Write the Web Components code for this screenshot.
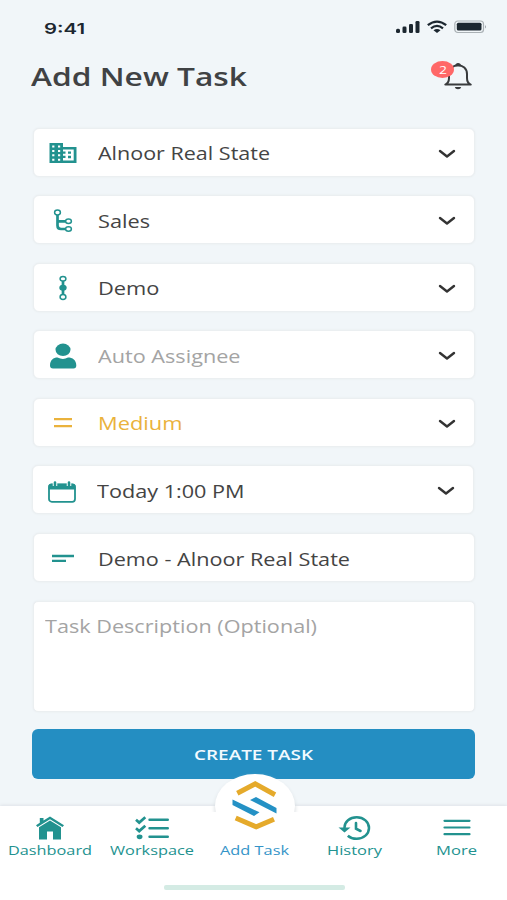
<!DOCTYPE html>
<html lang="en">
<head>
<meta charset="utf-8">
<title>Add New Task</title>
<style>
html,body{margin:0;padding:0}
body{width:507px;height:900px;overflow:hidden;background:#f1f6f9;font-family:"Open Sans","Noto Sans",sans-serif;color:#404040}
</style>
</head>
<body>
<task-screen></task-screen>
<script>
const define=(name,html,ready)=>customElements.define(name,class extends HTMLElement{
  connectedCallback(){
    if(this.shadowRoot)return;
    const root=this.attachShadow({mode:'open'});
    root.innerHTML=typeof html==='function'?html(this):html;
    if(ready)ready(this,root);
  }
});

// Text stretched horizontally to fill a given width
define('wide-text','<style>:host{display:block;flex:none;white-space:nowrap}span{display:inline-block;transform-origin:0 50%}</style><span></span>',(host,root)=>{
  const w=+host.getAttribute('w'),s=root.querySelector('span');
  host.style.width=w+'px';
  s.textContent=host.textContent;
  const n=s.getBoundingClientRect().width;
  if(n)s.style.transform=`scaleX(${w/n})`;
});

const icons={
 building:[28,22,'<path fill-rule="evenodd" fill="#22928f" d="M.5 1H14V5H27.500V21H.5ZM3.200 3.500V5.500H5.400V3.500ZM9 3.500V5.500H11.200V3.500ZM3.200 8V10H5.400V8ZM9 8V10H11.200V8ZM3.200 12.300V14.300H5.400V12.300ZM9 12.300V14.300H11.200V12.300ZM3.200 16.800V18.800H5.400V16.800ZM9 16.800V18.800H11.200V16.800ZM14 7.500V9.500H16.500V11.800H14V13.800H16.500V16H14V18.500H24.700V7.500ZM19 9.500H22V11.800H19ZM19 13.800H22V16.200H19Z"/>'],
 branch:[20,24,'<g fill="none" stroke="#22928f"><path stroke-width="2.700" d="M4.500 6V16.500Q4.500 20 8 20H12.500M4.500 12.300H12.500"/><g stroke-width="1.500"><ellipse cx="4.500" cy="3.500" rx="2.900" ry="2.400"/><ellipse cx="15.500" cy="12.300" rx="2.900" ry="2.200"/><ellipse cx="15.500" cy="20" rx="2.900" ry="2.200"/></g></g>'],
 steps:[10,26,'<path d="M5 5V21" stroke="#22928f" stroke-width="2.700"/><g fill="#fff" stroke="#22928f" stroke-width="1.500"><ellipse cx="5" cy="3.700" rx="2.900" ry="2.300"/><ellipse cx="5" cy="22" rx="2.900" ry="2.400"/></g><ellipse cx="5" cy="12.800" rx="3.700" ry="3" fill="#22928f"/>'],
 person:[28,26,'<g fill="#22928f"><ellipse cx="14" cy="6.800" rx="7.500" ry="6.200"/><path d="M1 22.500C1 17 4.500 14.500 8.500 14.500Q14 17.300 19 14.500C23.500 14.500 27.300 17 27.300 22.500Q27.300 25.500 24.500 25.500H4Q1 25.500 1 22.500Z"/></g>'],
 medium:[18,12,'<path d="M0 2.200H18M0 9.200H18" stroke="#eab23c" stroke-width="2.200"/>'],
 calendar:[28,22,'<rect x="1" y="3.500" width="26" height="17.300" rx="2.800" fill="none" stroke="#22928f" stroke-width="1.800"/><path fill="#22928f" d="M.5 8.500V5.500Q.5 2.700 3.500 2.700H24.500Q27.500 2.700 27.500 5.500V8.500Z"/><g stroke="#fff" stroke-width="4.500"><path d="M7 0V5M21 0V5"/></g><path d="M7 1.500V4.500M21 1.500V4.500" stroke="#22928f" stroke-width="2.600" stroke-linecap="round"/>'],
 notes:[22,10,'<path d="M0 2H22M0 6.800H14" stroke="#22928f" stroke-width="2.300"/>'],
 chevron:[18,10,'<path d="M2 2 9 7.500 16 2" fill="none" stroke="#333" stroke-width="2.400" stroke-linecap="round" stroke-linejoin="round"/>'],
 signal:[24,14,'<g fill="#1c2730"><rect x="0" y="8.800" width="4" height="4.200" rx="1.500"/><rect x="6.500" y="6.600" width="4" height="6.400" rx="1.300"/><rect x="13" y="4" width="4" height="9" rx="1.300"/><rect x="19.500" y="1" width="4" height="12" rx="1.300"/></g>'],
 wifi:[20,14,'<g fill="none" stroke="#1c2730" stroke-width="2.300"><path d="M.8 5.200Q10-2 19.200 5.200M4 8.300Q10 3.500 16 8.300"/></g><path fill="#1c2730" d="M6.500 10.200Q10 7.800 13.500 10.200L10 13Z"/>'],
 battery:[33,14,'<rect x=".8" y="1" width="28.700" height="11.500" rx="3" fill="none" stroke="#aab1b5" stroke-width="1.200"/><rect x="2.800" y="2.800" width="24.700" height="7.800" rx="1.500" fill="#1c2730"/><path d="M31 5Q33 6.800 31 8.500Z" fill="#9da5aa"/>'],
 bell:[28,28,'<path fill="none" stroke="#393b3d" stroke-width="2" stroke-linejoin="round" d="M1.300 22.600Q5 21 5 16V12C5 6.500 9.200 3.300 14 3.300S23 6.500 23 12V16Q23 21 26.700 22.600Z"/><path fill="#393b3d" d="M10.500 4.200Q11.500 1 14 .9T17.500 4.200ZM10.800 25H17.200Q16.800 27.300 14 27.300T10.800 25Z"/>'],
 home:[28,24,'<path fill="#22928f" d="M14 .5 28 9.300 26.500 11 14 3.300 1.500 11 0 9.300 3.800 6.800V2H7.500V4.500Z"/><path fill="#22928f" d="M14 4.400 25 11.200V23.500H17V15.500H11V23.500H3V11.200Z"/>'],
 list:[34,24,'<g fill="none" stroke="#22928f" stroke-width="2.400"><path stroke-linecap="round" d="M14.500 3.800H32.800M14.500 12.300H32.800M14.500 20.800H32.800"/><path stroke-width="2.700" d="M1 3.800 4.200 6.600 10.300 1.200M1 12.300 4.200 15.100 10.300 9.700"/></g><ellipse cx="4.600" cy="20.800" rx="2.900" ry="2.400" fill="#22928f"/>'],
 clock:[34,26,'<path fill="none" stroke="#22928f" stroke-width="2.500" d="M6.500 14V12.500C6.500 6.800 11.800 2.300 18.700 2.300S31 7 31 13 25.600 23.800 18.700 23.800Q13.300 23.800 9.800 20.700"/><path fill="#22928f" d="M.5 12.500H12.500L6.500 17.500Z"/><path fill="none" stroke="#22928f" stroke-width="2.600" stroke-linecap="round" d="M18 8V13.700L22.500 16"/>'],
 menu:[28,20,'<path d="M1.500 2.800H26.500M1.500 9.500H26.500M1.500 16.200H26.500" stroke="#22928f" stroke-width="2.200" stroke-linecap="round"/>'],
 logo:[46,50,'<g fill="none" stroke-width="5"><path stroke="#e5aa2b" d="M5.300 12.200 23.200 2.900 43 13.800M3.700 37 24.300 45.900 42 38.200"/></g><path fill="#2491c5" d="M.5 18.500 27.500 31.300 22 35 .5 24ZM18 19 24 16 44.500 27V32.500Z"/>']
};
define('line-icon',h=>{const [w,t,body]=icons[h.getAttribute('name')];return `<style>:host{display:block;flex:none;width:${w}px;height:${t}px}svg{display:block}</style><svg width="${w}" height="${t}" viewBox="0 0 ${w} ${t}">${body}</svg>`});

define('status-bar',`<style>:host{display:flex;align-items:center;height:54px;padding:0 20px 0 44px;box-sizing:border-box;font:600 15px/20px Inter,sans-serif;color:#1c2730}
wide-text{padding-top:3px}.r{margin-left:auto;display:flex;gap:7px}</style><wide-text w="41">9:41</wide-text><div class="r"><line-icon name="signal"></line-icon><line-icon name="wifi"></line-icon><line-icon name="battery"></line-icon></div>`);

define('page-header',`<style>:host{display:flex;align-items:center;height:44px;margin-bottom:2px;padding:0 35px 0 31px;font-weight:600;font-size:26px;line-height:36px;color:#404244}
.bell{margin-left:auto;position:relative}.badge{position:absolute;left:-13px;top:-1px;width:23px;height:17px;border-radius:50%;background:#ff6868;color:#fff;font:400 11px/17px "Open Sans",sans-serif;display:flex;justify-content:center}</style>
<wide-text w="216">Add New Task</wide-text><div class="bell"><line-icon name="bell"></line-icon><div class="badge"><wide-text w="8">2</wide-text></div></div>`);

define('form-field',h=>`<style>:host{display:flex;align-items:center;height:49px;box-sizing:border-box;border:1px solid #ebeff1;border-radius:6px;background:#fff;box-shadow:0 0 2px #e6eaed;font-size:17.6px;line-height:24px;padding:2px 18.500px 0 0;color:var(--ink,#444)}
.i{width:58px;flex:none;display:flex;justify-content:center}.t{margin-left:5.700px;flex:1}line-icon[name=chevron]{margin-top:1px}line-icon[name=calendar]{margin-top:2px}</style><div class="i"><line-icon name="${h.getAttribute('icon')}"></line-icon></div><div class="t"><wide-text w="${h.getAttribute('w')}">${h.textContent}</wide-text></div>${h.hasAttribute('plain')?'':'<line-icon name="chevron"></line-icon>'}`);

define('note-field',`<style>:host{display:block;height:111px;box-sizing:border-box;border:1px solid #ebeff1;border-radius:5px;background:#fff;box-shadow:0 0 2px #e6eaed;padding:12.500px 11.500px;margin-left:-.5px;font-size:17.6px;line-height:24px;color:#a4a4a4}</style><wide-text w="272">Task Description (Optional)</wide-text>`);

define('submit-button',`<style>:host{display:flex;height:49.500px;align-items:center;justify-content:center;border-radius:6px;background:#248ec2;color:#f2faff;font-size:15px;font-weight:600;line-height:20px}</style><wide-text w="119">CREATE TASK</wide-text>`);

define('nav-item',h=>`<style>:host{display:flex;flex-direction:column;align-items:center;justify-content:flex-end;height:53px;font-size:13.500px;line-height:18px;color:var(--ink,#22928f)}.i{height:26px;display:flex;align-items:center}line-icon[name=clock]{margin-top:-1px}</style><div class="i">${h.getAttribute('icon')?`<line-icon name="${h.getAttribute('icon')}"></line-icon>`:''}</div><wide-text w="${h.getAttribute('w')}">${h.textContent}</wide-text>`);

define('bottom-nav',`<style>:host{display:block;position:relative;height:94px;background:#fff;box-shadow:0 -1px 3px #dfe3e8}
.bubble{position:absolute;left:215px;top:-32px;width:80px;height:64px;border-radius:50%;background:#fff;box-shadow:0 3px 4px #d3d8db}
.cover{position:absolute;left:200px;top:6px;width:110px;height:35px;background:#fff}
.logo{position:absolute;left:232px;top:-25.500px}
.items{position:relative;display:grid;grid-template-columns:102px 102px 103px 97px 107px;margin-left:-1px}
.home{position:relative;width:181px;height:5px;border-radius:2px;background:#d4ebe4;margin:26px 0 0 164px}</style>
<div class="bubble"></div><div class="cover"></div><line-icon class="logo" name="logo"></line-icon>
<div class="items"><nav-item icon="home" w="84">Dashboard</nav-item><nav-item icon="list" w="84">Workspace</nav-item><nav-item w="69" style="--ink:#3494c8">Add Task</nav-item><nav-item icon="clock" w="55">History</nav-item><nav-item icon="menu" w="41">More</nav-item></div><div class="home"></div>`);

define('task-screen',`<style>:host{display:flex;flex-direction:column;width:507px;height:900px;background:#f1f6f9}
main{display:flex;flex-direction:column;gap:18.600px;padding:27.500px 32px 0 33.400px;height:678.500px}
.date{margin:0 1px 0 -1px}submit-button{margin:-1px 0 0 -1.400px}</style>
<status-bar></status-bar><page-header></page-header>
<main><form-field icon="building" w="172">Alnoor Real State</form-field><form-field icon="branch" w="52">Sales</form-field><form-field icon="steps" w="61.500">Demo</form-field><form-field icon="person" w="142.500" style="--ink:#a4a4a4">Auto Assignee</form-field><form-field icon="medium" w="84.500" style="--ink:#eab23c">Medium</form-field><form-field class="date" icon="calendar" w="147.500">Today 1:00 PM</form-field><form-field icon="notes" w="252" plain>Demo - Alnoor Real State</form-field><note-field></note-field><submit-button></submit-button></main>
<bottom-nav></bottom-nav>`);
</script>
</body>
</html>
